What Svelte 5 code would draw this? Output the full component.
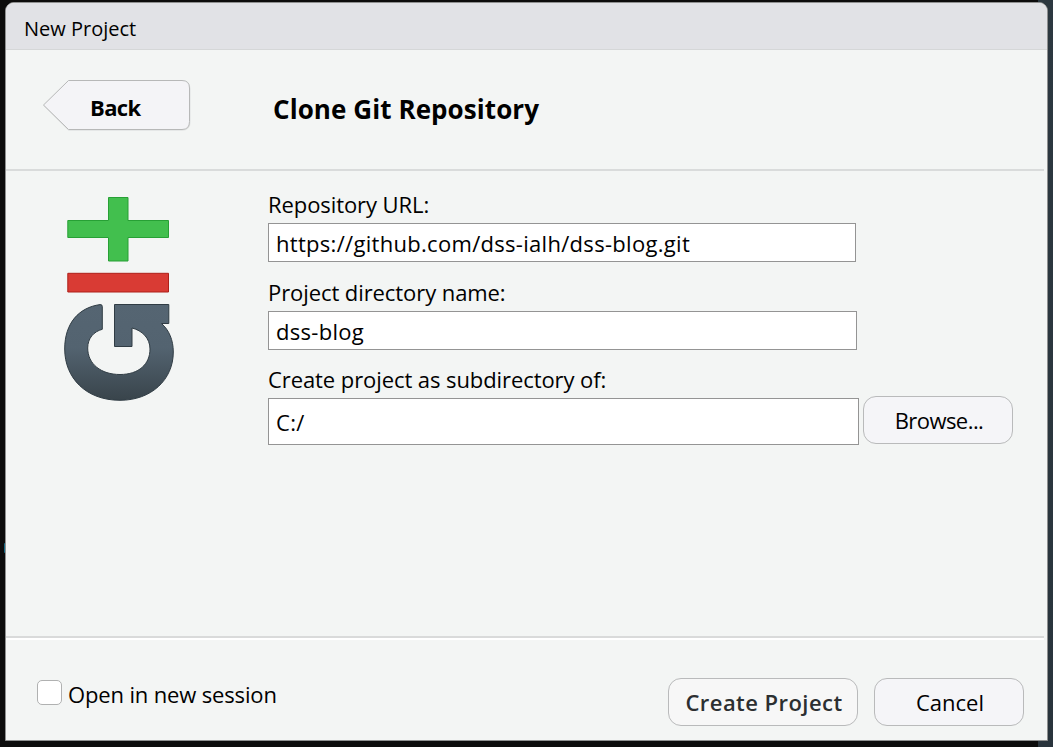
<script>
  let url = $state('https://github.com/dss-ialh/dss-blog.git');
  let name = $state('dss-blog');
  let parent = $state('C:/');
  let newSession = $state(false);
</script>

<div class="desktop">
  <span class="glow"></span>
  <div class="window">
    <header class="titlebar"><span>New Project</span></header>
    <section class="heading">
      <button class="back">
        <svg width="150" height="52" viewBox="0 0 150 52">
          <path d="M26.500 2.200H140Q148 2.200 148 10V43.500Q148 51.200 140 51.200H26.500L1.500 26.500Z" fill="none" stroke="#dfe1e1" />
          <path d="M26.500 1.500H140Q147.500 1.500 147.500 9V42.500Q147.500 50.500 140 50.500H26.500L1.500 26Z" fill="#f4f4f7" stroke="#b7b8b8" />
        </svg>
        <span>Back</span>
      </button>
      <h1>Clone Git Repository</h1>
    </section>
    <main>
      <svg class="logo" width="120" height="220" viewBox="60 190 120 220">
        <defs>
          <linearGradient id="slate" x1="0" y1="0" x2="0" y2="1">
            <stop offset="0" stop-color="#556572" />
            <stop offset=".45" stop-color="#536370" />
            <stop offset="1" stop-color="#39444b" />
          </linearGradient>
        </defs>
        <path d="M108.500 197.500H128V220.500H168.500V237.500H128V261H108.500V237.500H67.800V220.500H108.500Z" fill="#42bf4e" stroke="#27a035" stroke-linejoin="round" />
        <path d="M67.800 273.300H168.500V292H67.800Z" fill="#d93b34" stroke="#ae2019" stroke-linejoin="round" />
        <path d="M114.500 304.500H168.800V323.500H161.500C169 330 173.300 340 173.300 352C173.300 380 151 400.300 120 400.300C86 400.300 64.700 378 64.700 349C64.700 323 79 307.500 100 304.600Q102.300 304.300 102.300 306.500V329.300C94 331.500 87.700 338 87.700 348C87.700 364 101 374.500 120 374.500C139 374.500 150 364 150 349C150 338 142 330.500 132 328V346.500H114.500Z" fill="url(#slate)" stroke="#303c44" stroke-linejoin="round" />
      </svg>
      <div class="form">
        <label for="url">Repository URL:</label>
        <div class="row"><input id="url" class="i-url" bind:value={url} /></div>
        <label for="name">Project directory name:</label>
        <div class="row second"><input id="name" class="i-name" bind:value={name} /></div>
        <label for="parent">Create project as subdirectory of:</label>
        <div class="row last">
          <input id="parent" class="i-parent" bind:value={parent} />
          <button class="btn browse">Browse...</button>
        </div>
      </div>
    </main>
    <footer>
      <label class="check">
        <input type="checkbox" bind:checked={newSession} />
        <span>Open in new session</span>
      </label>
      <div class="actions">
        <button class="btn primary">Create Project</button>
        <button class="btn">Cancel</button>
      </div>
    </footer>
  </div>
</div>

<style>
  :global(body) { margin: 0; overflow: hidden; }
  * { box-sizing: border-box; }
  .desktop {
    position: relative;
    width: 1053px;
    height: 747px;
    padding: 2px 5px 6px;
    background: linear-gradient(#2c3840, #29343c) right / 15px 100% no-repeat, #0c0c0c;
    font: 22px/30px "Open Sans", "Noto Sans", sans-serif;
    color: #000;
  }
  .glow { position: absolute; left: 4px; top: 543px; width: 2px; height: 10px; background: #146a85; border-radius: 1px; }
  .window {
    position: relative;
    width: 1043px;
    height: 739px;
    display: flex;
    flex-direction: column;
    background: #f3f5f4;
    border: 1px solid #8f9090;
    border-radius: 9px 9px 0 0;
    overflow: hidden;
  }
  .titlebar { height: 47px; flex: none; background: #e1e2e6; border-bottom: 1px solid #d5d7d8; padding: 11px 0 0 18px; font-size: 20px; }
  .heading { height: 121px; flex: none; display: flex; margin-right: 3px; padding: 29px 0 0 36px; border-bottom: 2px solid #d9dbdb; }
  button { font: inherit; color: inherit; margin: 0; padding: 0; }
  .back { display: grid; width: 150px; height: 52px; border: 0; background: none; }
  .back svg, .back span { grid-area: 1 / 1; }
  .back span { justify-self: start; margin: 13px 0 0 48px; font-weight: 700; letter-spacing: -.6px; }
  h1 { margin: 14px 0 0 81px; font-size: 26px; line-height: 32px; font-weight: 700; letter-spacing: .08px; white-space: nowrap; }
  main { height: 465px; flex: none; display: flex; padding-top: 18px; }
  .logo { flex: none; margin: 1px 0 0 54px; }
  .form { margin-left: 88px; width: 770px; }
  .form label { display: block; height: 34px; letter-spacing: -.08px; }
  .row { display: flex; height: 54px; }
  .row.second { height: 53px; }
  .row.last { height: 47px; }
  input:not([type]) {
    margin: 0;
    height: 39px;
    padding: 1px 7px 0;
    border: 1px solid #949494;
    border-radius: 0;
    outline: 0;
    background: #fff;
    font: inherit;
    letter-spacing: .3px;
    color: inherit;
  }
  .i-url { width: 588px; }
  .i-name { width: 589px; }
  input.i-parent:not([type]) { width: 591px; height: 47px; }
  .btn { width: 150px; height: 48px; border: 1px solid #b9babb; border-radius: 13px; background: #f5f5f8; padding-left: 2px; text-align: center; }
  .browse { margin: -2px 0 0 4px; letter-spacing: -.55px; }
  footer { flex: 1; display: flex; justify-content: space-between; margin-right: 3px; padding: 38px 20px 0 31px; border-top: 2px solid #d9dada; box-shadow: inset 0 2px #fff; }
  .check { display: flex; height: 30px; letter-spacing: -.15px; }
  .check input { appearance: none; width: 25px; height: 25px; margin: 4px 6px 0 0; border: 1px solid #b0b1b1; border-radius: 5px; background: #fff; }
  .check span { margin-top: 3px; white-space: nowrap; }
  .actions { display: flex; gap: 16px; padding-top: 2px; }
  .primary { width: 190px; background: #f7f7f7; color: #2c2f31; font-weight: 600; letter-spacing: .45px; }
</style>
